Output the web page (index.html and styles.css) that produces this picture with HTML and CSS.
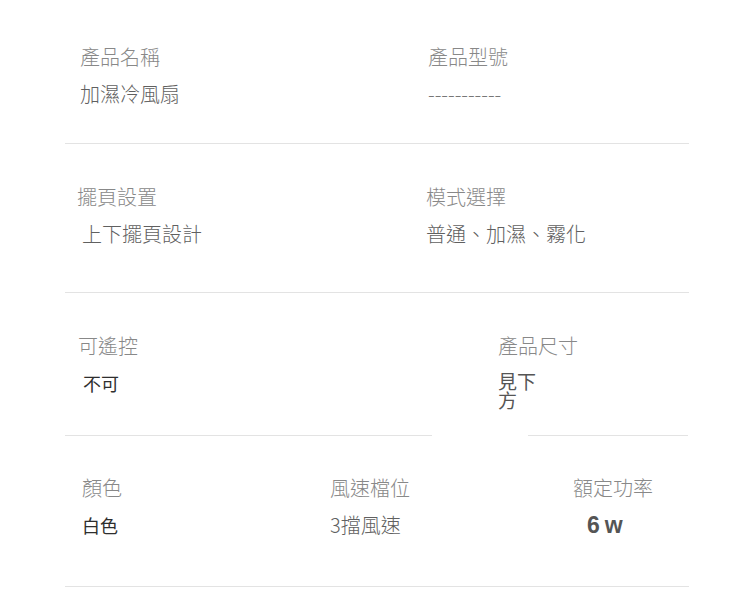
FILE: index.html
```html
<!DOCTYPE html>
<html lang="zh-Hant">

<head>
    <meta charset="UTF-8">
    <meta name="viewport" content="width=device-width, initial-scale=1.0">
    <title>產品規格</title>
    <link rel="stylesheet" href="styles.css">
</head>

<body>
    <div class="spec-sheet">
        <div class="spec-row row-name">
            <div class="spec-item">
                <div class="spec-label">產品名稱</div>
                <div class="spec-value">加濕冷風扇</div>
            </div>
            <div class="spec-item">
                <div class="spec-label">產品型號</div>
                <div class="spec-value dashes">-----------</div>
            </div>
        </div>
        <div class="rule"></div>

        <div class="spec-row row-mode">
            <div class="spec-item">
                <div class="spec-label">擺頁設置</div>
                <div class="spec-value nudge">上下擺頁設計</div>
            </div>
            <div class="spec-item">
                <div class="spec-label">模式選擇</div>
                <div class="spec-value">普通、加濕、霧化</div>
            </div>
        </div>
        <div class="rule"></div>

        <div class="spec-row row-remote">
            <div class="spec-item">
                <div class="spec-label">可遙控</div>
                <div class="spec-value dark nudge">不可</div>
            </div>
            <div class="spec-item">
                <div class="spec-label">產品尺寸</div>
                <div class="spec-value narrow">見下方</div>
            </div>
        </div>
        <div class="rule split">
            <span class="rule-left"></span>
            <span class="rule-right"></span>
        </div>

        <div class="spec-row row-misc">
            <div class="spec-item">
                <div class="spec-label">顏色</div>
                <div class="spec-value dark">白色</div>
            </div>
            <div class="spec-item">
                <div class="spec-label">風速檔位</div>
                <div class="spec-value">3擋風速</div>
            </div>
            <div class="spec-item">
                <div class="spec-label">額定功率</div>
                <div class="spec-value power">6w</div>
            </div>
        </div>
        <div class="rule"></div>
    </div>
</body>

</html>
```

FILE: styles.css
```css
body {
    margin: 0;
    background-color: #fff;
    font-family: "Noto Sans CJK TC", "Liberation Sans", sans-serif;
}

.spec-sheet {
    width: 624px;
    margin-left: 65px;
}

.spec-row {
    display: grid;
    box-sizing: border-box;
}

.spec-label {
    font-size: 20px;
    line-height: 24px;
    font-weight: 300;
    color: #888;
    white-space: nowrap;
}

.spec-value {
    margin-top: 13px;
    font-size: 20px;
    line-height: 24px;
    font-weight: 300;
    color: #606060;
    white-space: nowrap;
}

.spec-value.nudge {
    margin-left: 5px;
}

.spec-value.dark {
    font-size: 18px;
    font-weight: 400;
    color: #2e2e2e;
}

.spec-value.dashes {
    color: #777;
}

.spec-value.narrow {
    white-space: normal;
    width: 40px;
    font-size: 19px;
    line-height: 19px;
    font-weight: 400;
    color: #555;
}

.spec-value.power {
    margin-left: 14px;
    font-family: "Liberation Sans", Arial, sans-serif;
    font-size: 23px;
    font-weight: bold;
    color: #555;
    letter-spacing: 5px;
}

/* rows */
.row-name {
    height: 143px;
    padding: 45px 0 0 15px;
    grid-template-columns: 348px 1fr;
}

.row-mode {
    height: 148px;
    padding: 41px 0 0 12px;
    grid-template-columns: 349px 1fr;
}

.row-remote {
    height: 142px;
    padding: 41px 0 0 13px;
    grid-template-columns: 420px 1fr;
}

.row-misc {
    height: 150px;
    padding: 40px 0 0 17px;
    grid-template-columns: 248px 243px 1fr;
}

/* dividers */
.rule {
    height: 1px;
    background-color: #e3e3e3;
}

.rule.split {
    display: flex;
    background-color: transparent;
}

.rule-left {
    width: 367px;
    background-color: #e3e3e3;
}

.rule-right {
    width: 160px;
    margin-left: 96px;
    background-color: #e3e3e3;
}
```
